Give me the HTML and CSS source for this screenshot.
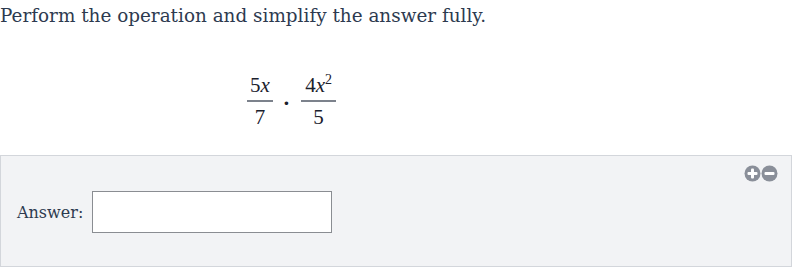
FILE: index.html
```html
<!DOCTYPE html>
<html>
<head>
<meta charset="utf-8">
<link rel="stylesheet" href="styles.css">
</head>
<body>
<div class="page">
  <p class="prompt">Perform the operation and simplify the answer fully.</p>
  <div class="math">
    <span class="frac">
      <span class="num">5<i>x</i></span>
      <span class="den">7</span>
    </span>
    <span class="dot">·</span>
    <span class="frac">
      <span class="num">4<i>x</i><sup>2</sup></span>
      <span class="den">5</span>
    </span>
  </div>
  <div class="panel">
    <div class="controls">
      <svg width="34" height="17" viewBox="0 0 34 17">
        <circle cx="8.5" cy="8.5" r="8" fill="#8a8f99"/>
        <rect x="7" y="3.5" width="3" height="10" rx="1" fill="#fff"/>
        <rect x="3.5" y="7" width="10" height="3" rx="1" fill="#fff"/>
        <circle cx="25.5" cy="8.5" r="8" fill="#8a8f99"/>
        <rect x="20.5" y="7" width="10" height="3" rx="1" fill="#fff"/>
      </svg>
    </div>
    <div class="row">
      <label class="label">Answer:</label>
      <div class="input"></div>
    </div>
  </div>
</div>
</body>
</html>
```
FILE: styles.css
```css
html, body {
  margin: 0;
  padding: 0;
  background: #fff;
}
.page {
  width: 793px;
  height: 268px;
  overflow: hidden;
  font-family: "DejaVu Serif", Georgia, serif;
  color: #2d3a4f;
}
.prompt {
  margin: 0;
  padding-top: 3px;
  font-size: 18.4px;
  line-height: 26px;
}
.math {
  display: flex;
  align-items: center;
  padding-left: 245px;
  margin-top: 42px;
  height: 60px;
  font-family: "Liberation Serif", serif;
  font-size: 21px;
  color: #1a202c;
}
.frac {
  display: inline-flex;
  flex-direction: column;
  align-items: center;
  padding: 0 2px;
}
.num {
  display: block;
  border-bottom: 2px solid #7c828c;
  padding: 0 3px 4px;
  line-height: 22px;
}
.num i {
  font-style: italic;
}
.num sup {
  font-size: 14px;
  vertical-align: 8px;
  line-height: 0;
}
.frac + .dot + .frac .num {
  padding: 0 4px 4px;
}
.den {
  display: block;
  padding-top: 4px;
  line-height: 22px;
}
.dot {
  margin: 4px 9px 0 8px;
  font-size: 22px;
  font-weight: bold;
}
.panel {
  margin-top: 24px;
  height: 110px;
  width: 790px;
  background: #f2f3f5;
  border: 1px solid #d3d6db;
  position: relative;
}
.controls {
  position: absolute;
  right: 13px;
  top: 9px;
  display: flex;
}
.row {
  display: flex;
  align-items: center;
  padding-left: 16px;
  padding-top: 35px;
  gap: 9px;
}
.label {
  font-size: 16px;
}
.input {
  width: 238px;
  height: 40px;
  background: #fff;
  border: 1px solid #8a8d92;
}
```
